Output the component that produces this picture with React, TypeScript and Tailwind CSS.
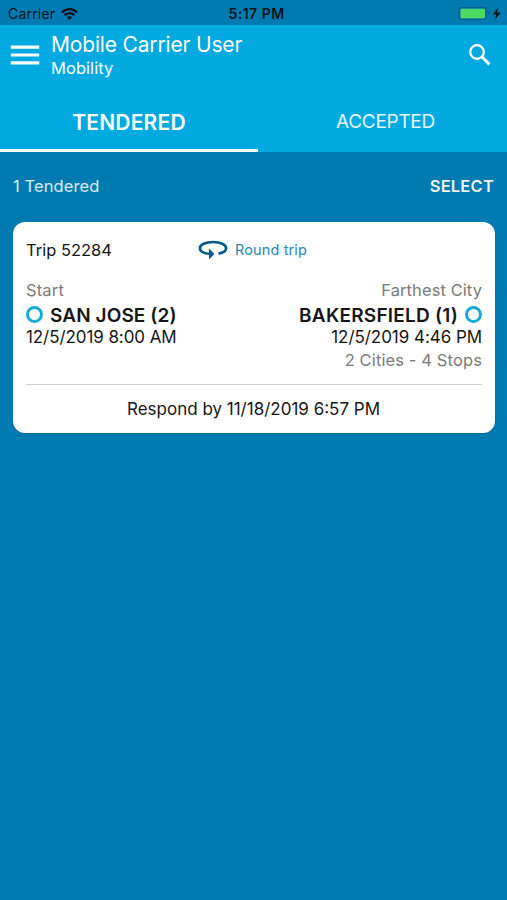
import { MdMenu } from 'react-icons/md'

function StatusBar() {
  return (
    <div className="grid h-[25px] grid-cols-3 items-center bg-[#007bb1] pl-2 pr-[5px] pt-[2px] text-[#06131b]">
      <div className="flex items-center gap-[6px]">
        <span className="text-[14px] leading-none tracking-[0.2px]">Carrier</span>
        <svg className="h-3 w-[17px]" viewBox="0 0 17 12" fill="none" stroke="currentColor" strokeWidth="2.3">
          <path d="M0.9 4.4C5 -0.1 12 -0.1 16.1 4.4" />
          <path d="M3.7 7.3C6.4 4.5 10.6 4.5 13.3 7.3" />
          <path d="M8.5 12L5.8 9.2C7.3 7.8 9.7 7.8 11.2 9.2Z" fill="currentColor" stroke="none" />
        </svg>
      </div>
      <span className="pl-[3px] text-center text-[14px] font-semibold leading-none tracking-[0.5px]">5:17 PM</span>
      <div className="flex items-center justify-end">
        <svg className="h-[14px] w-[44px]" viewBox="0 0 44 14">
          <rect x="0.9" y="0.4" width="27.2" height="12.2" rx="3" fill="none" stroke="#05608b" strokeWidth="1.3" />
          <rect x="2.5" y="1.8" width="24.5" height="9.4" rx="1.2" fill="#4cd964" />
          <path d="M30 4.3C31.8 4.9 31.8 8.1 30 8.7Z" fill="#05608b" />
          <path d="M40.3 0.4L34.7 7.5H38.2L37.2 12.5L42.8 5.4H39.2Z" fill="currentColor" />
        </svg>
      </div>
    </div>
  )
}

function SearchIcon() {
  return (
    <svg className="mr-[16px] mt-[19px] h-[22px] w-[22px]" viewBox="0 0 22 22" fill="none" stroke="currentColor">
      <circle cx="8" cy="8" r="6.8" strokeWidth="2.3" />
      <path d="M12.8 12.8L20.4 20.4" strokeWidth="3" />
    </svg>
  )
}

function Header() {
  return (
    <header className="flex h-[65px] items-start bg-[#00a9e0] text-white">
      <MdMenu className="ml-[6px] mt-[11px] h-[38px] w-[38px]" />
      <div className="ml-[7px] flex-1 pt-[8px]">
        <h1 className="text-[21px] leading-6 tracking-[-0.17px]">Mobile Carrier User</h1>
        <p className="text-[16.5px] leading-[23px] tracking-[0.05px]">Mobility</p>
      </div>
      <SearchIcon />
    </header>
  )
}

function Tabs() {
  return (
    <nav className="flex h-[62px] bg-[#00a9e0] text-white">
      <div className="flex w-[258px] items-center justify-center border-b-[3px] border-white pt-[6px] text-[21px] font-semibold tracking-[0.2px]">
        TENDERED
      </div>
      <div className="flex flex-1 items-center justify-center pl-[6px] pt-[2px] text-[19px] tracking-[-0.3px] text-white/90">
        ACCEPTED
      </div>
    </nav>
  )
}

function RoundTripIcon() {
  return (
    <svg className="h-5 w-[30px]" viewBox="0 0 30 20" fill="none" stroke="#075b86" strokeWidth="2.7">
      <path d="M12.5 14C5.8 13.5 1.9 11.5 1.9 8.2C1.9 4.6 7.4 2 15 2S28.1 4.6 28.1 8.2C28.1 10.7 25.4 12.7 20.5 13.6" />
      <path d="M11 8.5L16.4 14L11 19.6Z" fill="#075b86" stroke="none" />
    </svg>
  )
}

function Dot() {
  return <span className="mb-px h-[17px] w-[17px] rounded-full border-[3px] border-[#12abdb]" />
}

function TripCard() {
  return (
    <section className="ml-[13px] mr-[12px] h-[211px] rounded-[12px] bg-white px-[13px] text-[#161616] shadow-sm">
      <div className="flex h-[56px] items-center">
        <span className="w-[172px] text-[16.5px]">Trip 52284</span>
        <RoundTripIcon />
        <span className="ml-[7px] text-[14.5px] tracking-[0.12px] text-[#2a87b5]">Round trip</span>
      </div>

      <div className="flex h-[106px] justify-between">
        <div>
          <div className="text-[16.5px] leading-[25px] tracking-[0.15px] text-[#7b7b7b]">Start</div>
          <div className="flex h-[24px] items-center gap-[7px] text-[19px] font-semibold tracking-[0.1px]">
            <Dot />
            <span className="pt-[2px]">SAN JOSE (2)</span>
          </div>
          <div className="text-[17px] leading-5 tracking-[-0.08px]">12/5/2019 8:00 AM</div>
        </div>
        <div className="text-right">
          <div className="text-[16.5px] leading-[25px] tracking-[0.08px] text-[#7b7b7b]">Farthest City</div>
          <div className="flex h-[24px] items-center justify-end gap-[7px] text-[19px] font-semibold tracking-[0.22px]">
            <span className="pt-[2px]">BAKERSFIELD (1)</span>
            <Dot />
          </div>
          <div className="text-[17px] leading-5 tracking-[-0.05px]">12/5/2019 4:46 PM</div>
          <div className="text-[16.5px] leading-[26px] tracking-[0.12px] text-[#7b7b7b]">2 Cities - 4 Stops</div>
        </div>
      </div>

      <div className="flex h-[49px] items-center justify-center border-t border-[#d2d2d2] pr-[1px] pt-[2px] text-[17px]">
        Respond by 11/18/2019 6:57 PM
      </div>
    </section>
  )
}

export default function App() {
  return (
    <div className="h-[900px] w-[507px] overflow-hidden bg-[#007bb1] font-['Inter',sans-serif]">
      <StatusBar />
      <Header />
      <Tabs />
      <div className="flex h-[70px] items-center justify-between px-[13px] pb-[2px] text-white">
        <span className="text-[16.5px] tracking-[0.1px] text-white/85">1 Tendered</span>
        <span className="text-[16.5px] font-semibold tracking-[0.2px] text-white/95">SELECT</span>
      </div>
      <TripCard />
    </div>
  )
}
